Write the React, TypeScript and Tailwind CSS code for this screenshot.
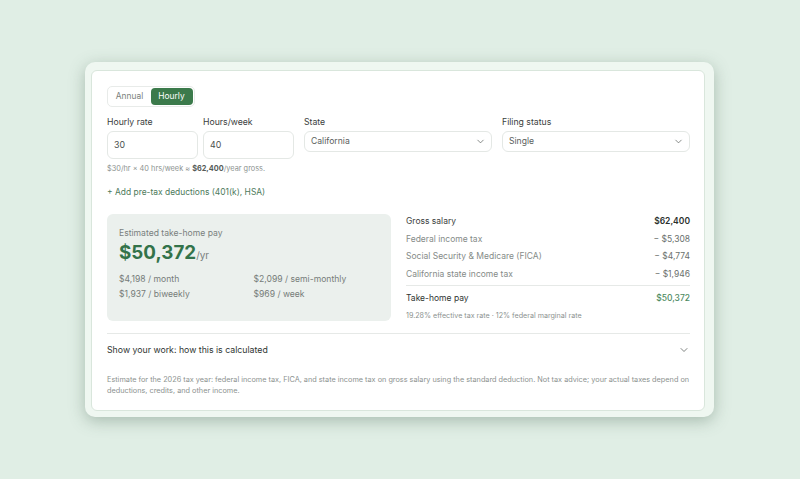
import { ChevronDown } from "lucide-react";

function Field({ label, value, w }: { label: string; value: string; w: string }) {
  return (
    <div className={`flex flex-col ${w}`}>
      <div className="text-[8.7px] leading-[14px] h-[14px] mb-[2px] text-[#3a403d]">{label}</div>
      <div className="h-[28px] rounded-[6px] border border-[#e4e8e5] bg-white pl-[6px] flex items-center text-[8.8px] text-[#4a504d]">{value}</div>
    </div>
  );
}

function Select({ label, value }: { label: string; value: string }) {
  return (
    <div className="flex flex-col w-[188px]">
      <div className="text-[8.7px] leading-[14px] h-[14px] mb-[2px] text-[#3a403d]">{label}</div>
      <div className="h-[21px] rounded-[6px] border border-[#e4e8e5] bg-white pl-[6px] pr-[5px] flex items-center justify-between text-[8.6px] text-[#5a605d]">
        <span>{value}</span>
        <ChevronDown size={11} strokeWidth={1.5} className="text-[#555b58]" />
      </div>
    </div>
  );
}

function Row({ a, b, strong }: { a: string; b: string; strong?: boolean }) {
  return (
    <div className="flex justify-between items-center h-[17.7px] text-[8.5px]">
      <span className={strong ? "text-[#3a403d]" : "text-[#858b88]"}>{a}</span>
      <span className={strong ? "text-[#2a2f2c] font-semibold" : "text-[#6a706d]"}>{b}</span>
    </div>
  );
}

export default function App() {
  return (
    <div className="w-[800px] h-[479px] bg-[#e0eee5] pt-[62px] pl-[85px] font-['Inter',sans-serif] overflow-hidden">
      <div className="w-[629px] h-[355px] bg-[#eff7f1] rounded-[10px] pl-[6px] pr-[9px] pt-[8px] pb-[6px] shadow-[0_4px_16px_rgba(70,100,80,0.36)]">
        <div className="w-[614px] h-[341px] bg-white rounded-[6px] border border-[#d9e6dc] pt-[15px] pl-[15px] pr-[14px]">
          <div className="flex items-center h-[21px] w-[88px] -ml-[0.5px] rounded-[5px] border border-[#e8ebe9] pr-[1px]">
            <span className="flex-1 text-center text-[8.4px] text-[#7a807d] pl-[1px]">Annual</span>
            <span className="w-[42px] h-[17px] rounded-[4px] bg-[#3b7a4b] text-white text-[8.4px] flex items-center justify-center">Hourly</span>
          </div>

          <div className="flex mt-[8px] h-[44px] items-start">
            <Field label="Hourly rate" value="30" w="w-[91px]" />
            <div className="w-[5px]" />
            <Field label="Hours/week" value="40" w="w-[91px]" />
            <div className="w-[10px]" />
            <Select label="State" value="California" />
            <div className="w-[10px]" />
            <Select label="Filing status" value="Single" />
          </div>

          <div className="mt-[4px] text-[7.35px] leading-[12px] text-[#8c928f]">
            $30/hr × 40 hrs/week ≈ <span className="font-bold text-[#555b58]">$62,400</span>/year gross.
          </div>

          <div className="mt-[11px] text-[8.45px] leading-[12px] text-[#4d7a5b]">+ Add pre-tax deductions (401(k), HSA)</div>

          <div className="flex mt-[16px] h-[107px]">
            <div className="w-[284px] h-[107px] rounded-[6px] bg-[#ebf0ed] pl-[12px] pt-[13px]">
              <div className="text-[8.6px] leading-[12px] text-[#7a807d]">Estimated take-home pay</div>
              <div className="flex items-baseline mt-[1px] h-[26px]">
                <span className="text-[18.8px] leading-[26px] font-bold text-[#33734a]">$50,372</span>
                <span className="text-[10px] text-[#7a807d]">/yr</span>
              </div>
              <div className="grid grid-cols-[134.5px_1fr] mt-[6px] text-[8.6px] leading-[15px] text-[#767c79]">
                <span>$4,198 / month</span>
                <span>$2,099 / semi-monthly</span>
                <span>$1,937 / biweekly</span>
                <span>$969 / week</span>
              </div>
            </div>
            <div className="w-[284px] ml-[15px] -mt-[1.5px]">
              <Row a="Gross salary" b="$62,400" strong />
              <Row a="Federal income tax" b="− $5,308" />
              <Row a="Social Security & Medicare (FICA)" b="− $4,774" />
              <Row a="California state income tax" b="− $1,946" />
              <div className="border-t border-[#e6e9e7] mt-[2px] flex justify-between items-center h-[25px] text-[8.5px]">
                <span className="text-[#2f3532]">Take-home pay</span>
                <span className="text-[#4d8a5f] font-medium">$50,372</span>
              </div>
              <div className="text-[7.15px] leading-[12px] text-[#8c928f]">19.28% effective tax rate · 12% federal marginal rate</div>
            </div>
          </div>

          <div className="border-t border-[#e6e9e7] mt-[12px] h-[34px] flex items-center justify-between">
            <span className="text-[8.75px] text-[#2f3532]">Show your work: how this is calculated</span>
            <ChevronDown size={12} strokeWidth={1.5} className="text-[#555b58] -mt-[2px]" />
          </div>

          <div className="mt-[8px] text-[7.3px] leading-[10.5px] text-[#8c928f]">
            Estimate for the 2026 tax year: federal income tax, FICA, and state income tax on gross salary using the standard deduction. Not tax advice; your actual taxes depend on deductions, credits, and other income.
          </div>
        </div>
      </div>
    </div>
  );
}
